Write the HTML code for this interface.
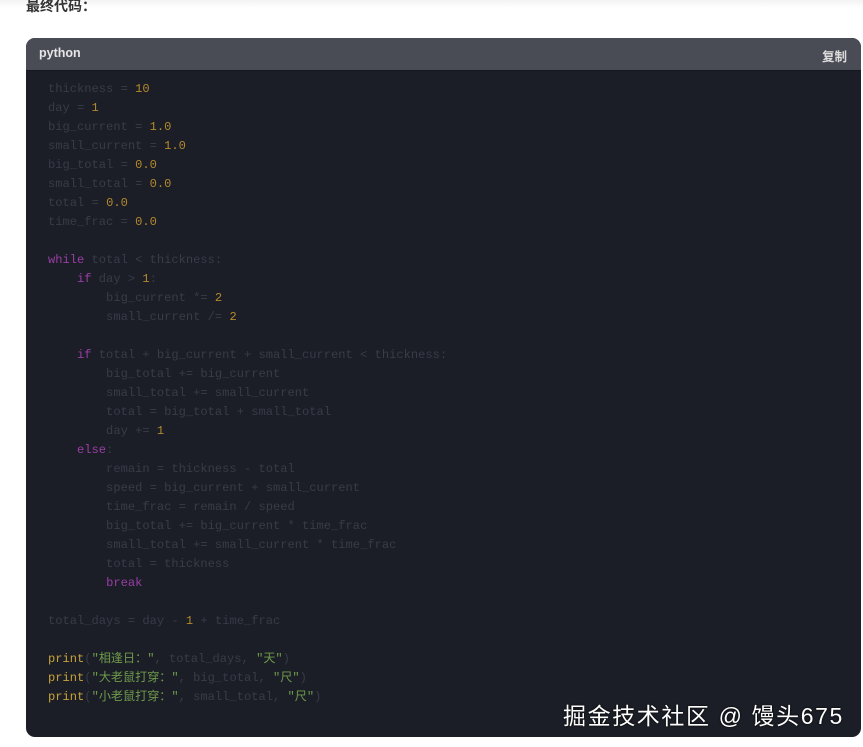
<!DOCTYPE html>
<html><head><meta charset="utf-8"><style>
body{margin:0;width:863px;height:747px;background:#fff;position:relative;overflow:hidden;font-family:"Liberation Sans","Noto Sans CJK SC",sans-serif}
.top{position:absolute;left:0;top:0;width:863px;height:8px;background:linear-gradient(#f3f3f3,#fff)}
.h{position:absolute;left:26px;top:-4px;font-size:14px;color:#333;font-weight:bold}
.box{position:absolute;left:26px;top:38px;width:835px;height:699px;background:#1b1e26;border-radius:9px;overflow:hidden}
.hd{height:32px;background:#4a4c55;border-bottom:1px solid #15171d;position:relative}
.hd .l{position:absolute;left:13px;top:8px;color:#e6e6e6;font-size:12.5px;font-weight:bold}
.hd .r{position:absolute;right:14px;top:8px;color:#ddd;font-size:12.5px;font-weight:bold}
pre{margin:0;padding:9px 0 0 22px;font-family:"Liberation Mono","Noto Sans CJK SC",monospace;font-size:12.1px;line-height:19px;color:#373c47}
.n{color:#b3892c}.k{color:#9a3da6}.p{color:#c7a23a}.s{color:#6f9a4c}
.wm{position:absolute;left:563px;top:697px;font-size:23px;letter-spacing:1.6px;color:#fff;text-shadow:0 0 2px #000}
</style></head><body>
<div class="top"></div>
<div class="h">最终代码：</div>
<div class="box"><div class="hd"><span class="l">python</span><span class="r">复制</span></div>
<pre>thickness = <span class="n">10</span>
day = <span class="n">1</span>
big_current = <span class="n">1.0</span>
small_current = <span class="n">1.0</span>
big_total = <span class="n">0.0</span>
small_total = <span class="n">0.0</span>
total = <span class="n">0.0</span>
time_frac = <span class="n">0.0</span>

<span class="k">while</span> total &lt; thickness:
    <span class="k">if</span> day &gt; <span class="n">1</span>:
        big_current *= <span class="n">2</span>
        small_current /= <span class="n">2</span>

    <span class="k">if</span> total + big_current + small_current &lt; thickness:
        big_total += big_current
        small_total += small_current
        total = big_total + small_total
        day += <span class="n">1</span>
    <span class="k">else</span>:
        remain = thickness - total
        speed = big_current + small_current
        time_frac = remain / speed
        big_total += big_current * time_frac
        small_total += small_current * time_frac
        total = thickness
        <span class="k">break</span>

total_days = day - <span class="n">1</span> + time_frac

<span class="p">print</span>(<span class="s">"相逢日："</span>, total_days, <span class="s">"天"</span>)
<span class="p">print</span>(<span class="s">"大老鼠打穿："</span>, big_total, <span class="s">"尺"</span>)
<span class="p">print</span>(<span class="s">"小老鼠打穿："</span>, small_total, <span class="s">"尺"</span>)</pre>
</div>
<div class="wm">掘金技术社区 @ 馒头675</div>
</body></html>
